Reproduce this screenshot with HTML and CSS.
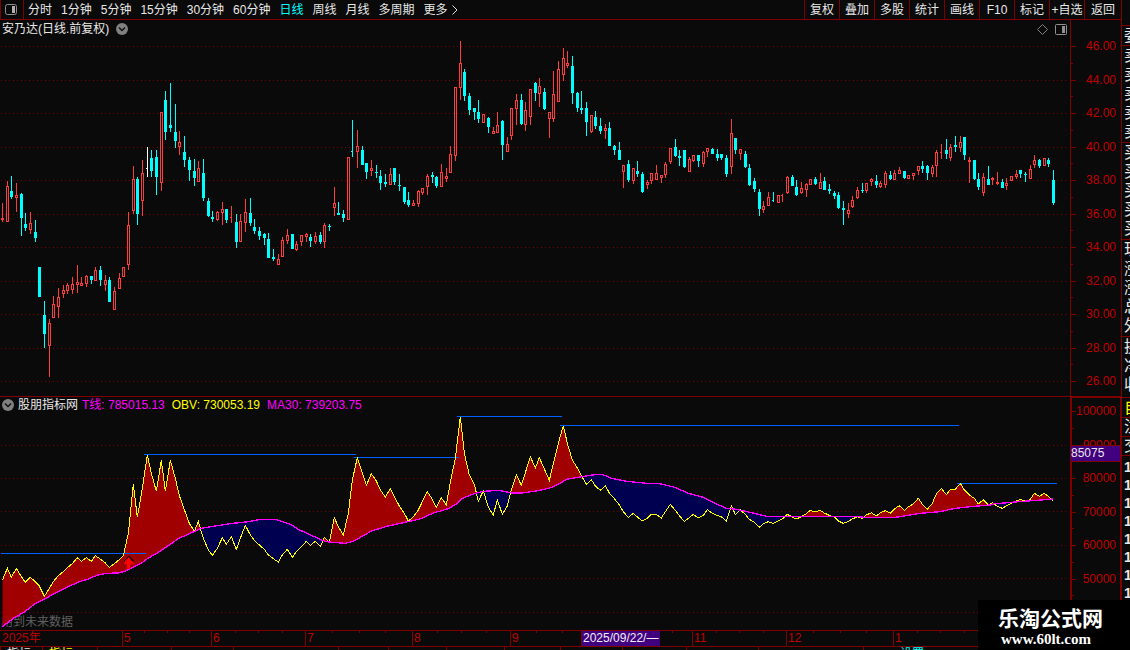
FILE: index.html
```html
<!DOCTYPE html>
<html lang="zh-CN">
<head>
    <meta charset="UTF-8">
    <meta name="viewport" content="width=device-width, initial-scale=1.0">
    <title>安乃达 日线</title>
    <link rel="stylesheet" href="styles.css">
</head>
<body>
    <main class="terminal">
        <header class="toolbar">
            <button class="layout-btn" type="button" aria-label="布局">
                <svg width="13" height="12" viewBox="0 0 13 12"><rect x="0.5" y="0.5" width="11" height="10" rx="2" fill="none" stroke="#909090"/><rect x="7" y="2" width="3" height="7" fill="#b0b0b0"/></svg>
            </button>
            <nav class="periods">
                <button type="button">分时</button>
                <button type="button">1分钟</button>
                <button type="button">5分钟</button>
                <button type="button">15分钟</button>
                <button type="button">30分钟</button>
                <button type="button">60分钟</button>
                <button type="button" class="active">日线</button>
                <button type="button">周线</button>
                <button type="button">月线</button>
                <button type="button">多周期</button>
                <button type="button" class="more">更多
                    <svg width="6" height="10" viewBox="0 0 6 10"><path d="M0.5 0.5 L5 5 L0.5 9.5" fill="none" stroke="#e0e0e0"/></svg>
                </button>
            </nav>
            <nav class="tools">
                <button type="button">复权</button>
                <button type="button">叠加</button>
                <button type="button">多股</button>
                <button type="button">统计</button>
                <button type="button">画线</button>
                <button type="button">F10</button>
                <button type="button">标记</button>
                <button type="button">+自选</button>
                <button type="button">返回</button>
            </nav>
        </header>

        <section class="panel price-panel">
            <div class="plot">
                <svg id="price-chart" viewBox="0 20 1070 376" preserveAspectRatio="none"></svg>
                <div class="panel-head">
                    <span>安乃达(日线.前复权)</span>
                    <button type="button" class="round" aria-label="展开">
                        <svg width="12" height="12" viewBox="0 0 12 12"><circle cx="6" cy="6" r="6" fill="#808080"/><path d="M3 4.5 L6 7.5 L9 4.5" fill="none" stroke="#101010" stroke-width="1.5"/></svg>
                    </button>
                    <div class="head-icons">
                        <svg width="11" height="11" viewBox="0 0 11 11"><path d="M5.5 0.5 L10.5 5.5 L5.5 10.5 L0.5 5.5 Z" fill="none" stroke="#808080"/></svg>
                        <svg width="12" height="11" viewBox="0 0 12 11"><rect x="0.5" y="0.5" width="11" height="10" rx="1" fill="none" stroke="#909090"/><rect x="7" y="2" width="3" height="7" fill="#909090"/></svg>
                    </div>
                </div>
            </div>
            <ul class="scale price-scale">
                <li>46.00</li><li class="minor"></li>
                <li>44.00</li><li class="minor"></li>
                <li>42.00</li><li class="minor"></li>
                <li>40.00</li><li class="minor"></li>
                <li>38.00</li><li class="minor"></li>
                <li>36.00</li><li class="minor"></li>
                <li>34.00</li><li class="minor"></li>
                <li>32.00</li><li class="minor"></li>
                <li>30.00</li><li class="minor"></li>
                <li>28.00</li><li class="minor"></li>
                <li>26.00</li>
            </ul>
        </section>

        <section class="panel obv-panel">
            <div class="plot">
                <span class="notice">用到未来数据</span>
                <svg id="obv-chart" viewBox="0 6 3210 699" preserveAspectRatio="none"></svg>
                <div class="panel-head">
                    <button type="button" class="round" aria-label="展开">
                        <svg width="12" height="12" viewBox="0 0 12 12"><circle cx="6" cy="6" r="6" fill="#808080"/><path d="M3 4.5 L6 7.5 L9 4.5" fill="none" stroke="#101010" stroke-width="1.5"/></svg>
                    </button>
                    <span>股朋指标网</span>
                    <div class="readings">
                        <span class="magenta">T线: 785015.13</span>
                        <span class="yellow">OBV: 730053.19</span>
                        <span class="magenta">MA30: 739203.75</span>
                    </div>
                </div>
            </div>
            <ul class="scale obv-scale">
                <li>100000</li><li class="minor"></li>
                <li>90000</li><li class="minor"></li>
                <li>80000</li><li class="minor"></li>
                <li>70000</li><li class="minor"></li>
                <li>60000</li><li class="minor"></li>
                <li>50000</li><li class="minor"></li>
                <li></li>
            </ul>
            <span class="value-tag">85075</span>
        </section>

        <div class="time-axis">
            <svg id="time-ticks" viewBox="0 0 1070 15" preserveAspectRatio="none"></svg>
            <span>2025年</span>
            <span>5</span>
            <span>6</span>
            <span>7</span>
            <span>8</span>
            <span>9</span>
            <span>11</span>
            <span>12</span>
            <span>1</span>
            <span class="date-tag">2025/09/22/—</span>
        </div>

        <footer class="tabs">
            <span>指标</span>
            <span class="yellow">指标</span>
            <span></span>
            <span></span>
            <span></span>
            <span></span>
            <span></span>
            <span></span>
            <span></span>
            <span></span>
            <span></span>
            <span></span>
            <span></span>
            <span class="cyan">设置</span>
        </footer>
    </main>

    <aside class="quote">
        <div class="group"><p>委比</p></div>
        <div class="group five"><p>卖五</p><p>卖四</p><p>卖三</p><p>卖二</p><p>卖一</p></div>
        <div class="group five"><p>买一</p><p>买二</p><p>买三</p><p>买四</p><p>买五</p></div>
        <div class="group five"><p>现价</p><p>涨跌</p><p>涨幅</p><p>总量</p><p>外盘</p></div>
        <div class="group three"><p>换手</p><p>净资</p><p>收益</p></div>
        <div class="group yellow"><p>自选</p></div>
        <div class="group row"><p>注册</p></div>
        <div class="group row"><p>交易</p></div>
        <div class="group trades"><p>14</p><p>14</p><p>14</p><p>14</p><p>14</p><p>14</p><p>14</p><p>14</p></div>
    </aside>

    <div class="site-logo">
        <strong>乐淘公式网</strong>
        <em>www.60lt.com</em>
    </div>

    <script src="chart.js"></script>
</body>
</html>
```
FILE: styles.css
```css
/* General Styles */
* {
    box-sizing: border-box;
}

body {
    display: flex;
    height: 100vh;
    margin: 0;
    overflow: hidden;
    background-color: #0a0a0a;
    color: #e8e8e8;
    font-family: "Liberation Sans", "Noto Sans CJK SC", sans-serif;
    font-size: 12px;
    line-height: 14px;
}

button {
    padding: 0;
    border: none;
    background: none;
    color: inherit;
    font: inherit;
    white-space: nowrap;
    cursor: pointer;
}

svg {
    display: block;
}

ul, p {
    margin: 0;
    padding: 0;
    list-style: none;
}

.yellow {
    color: #ffff00;
}

.magenta {
    color: #ff00ff;
}

.cyan {
    color: #00ffff;
}

.terminal {
    display: grid;
    flex: 1;
    grid-template-rows: 20px 376fr 234fr 16px 4px;
    min-width: 0;
}

/* Toolbar */
.toolbar {
    display: flex;
    border-bottom: 1px solid #800000;
    overflow: hidden;
}

.layout-btn {
    width: 24px;
    padding-left: 4px;
    border: 1px solid #800000;
    border-width: 0 1px;
}

.periods {
    display: flex;
    flex: 1;
    gap: 9px;
    padding-left: 4px;
}

.periods .active {
    color: #00ffff;
}

.periods .more {
    display: flex;
    align-items: center;
    gap: 4px;
}

.tools {
    display: flex;
}

.tools button {
    width: 35px;
    border-left: 1px solid #800000;
}

.tools button:last-child {
    width: 37px;
}

/* Chart panels */
.panel {
    position: relative;
    display: grid;
    grid-template-columns: 1fr 51px;
    min-height: 0;
}

.obv-panel {
    border-top: 1px solid #800000;
}

.plot {
    display: grid;
    min-width: 0;
    min-height: 0;
}

.plot > * {
    grid-area: 1 / 1;
}

.plot > svg {
    width: 100%;
    height: 100%;
    min-height: 0;
}

.panel-head {
    display: flex;
    align-self: start;
    align-items: center;
    gap: 4px;
    padding: 2px 2px 0;
}

.obv-panel .panel-head {
    padding-top: 1px;
}

.price-panel .panel-head {
    gap: 7px;
    padding-right: 3px;
}

.readings {
    display: flex;
    gap: 7px;
}

.head-icons {
    display: flex;
    gap: 7px;
    margin-left: auto;
}

.notice {
    align-self: end;
    padding: 0 0 1px 1px;
    color: #606060;
}

.scale {
    display: flex;
    flex-direction: column;
    justify-content: space-between;
    border-left: 1px solid #800000;
    color: #c00000;
    line-height: 13px;
}

.price-scale {
    padding: 20px 5px 8px 0;
}

.obv-scale {
    padding: 7px 4px 11px 0;
    border: 1px solid #800000;
    border-width: 1px 1px 0 2px;
}

.scale li {
    display: flex;
    align-items: center;
    justify-content: space-between;
    height: 13px;
}

.scale li::before {
    content: "";
    width: 5px;
    height: 1px;
    background-color: #800000;
}

.obv-scale li::before {
    width: 4px;
    margin-right: -4px;
}

.scale .minor::before {
    width: 2px;
}

.value-tag {
    position: absolute;
    top: 48px;
    right: 1px;
    width: 49px;
    border: 1px solid #800000;
    border-width: 1px 0;
    background-color: #400080;
    line-height: 15px;
}

/* Time axis */
.time-axis {
    position: relative;
    display: grid;
    grid-template-columns: 122fr 89fr 94fr 107fr 98fr 182fr 94fr 107fr 177fr;
    padding-right: 51px;
    border-top: 1px solid #800000;
    color: #c00000;
    line-height: 15px;
}

.time-axis svg {
    position: absolute;
    width: calc(100% - 51px);
    height: 100%;
}

.time-axis span {
    padding-left: 1px;
    border-left: 1px solid #800000;
}

.time-axis svg + span {
    border-color: transparent;
}

.time-axis .date-tag {
    position: absolute;
    left: calc((100% - 51px) * 581 / 1070);
    width: 79px;
    background-color: #400080;
    color: #f0f0f0;
    white-space: nowrap;
}

.tabs {
    display: grid;
    grid-template-columns: 42fr 55fr 74fr 62fr 105fr 50fr 58fr 58fr 56fr 62fr 64fr 72fr 105fr 258fr;
    border-top: 1px solid #800000;
    overflow: hidden;
}

.tabs span {
    padding-left: 6px;
    border-left: 1px solid #800000;
}

.tabs .cyan {
    padding-left: 36px;
}

/* Quote panel */
.quote {
    flex: 0 0 9px;
    padding-top: 25px;
    border-left: 1px solid #800000;
    overflow: hidden;
    font-size: 16px;
    line-height: 19px;
    white-space: nowrap;
}

.group {
    padding-left: 2px;
    border-top: 1px solid #800000;
}

.group.five {
    padding-bottom: 1px;
}

.group.three {
    padding-bottom: 3px;
}

.group.row p {
    line-height: 18px;
}

.group.trades {
    padding-top: 2px;
    font-size: 14px;
    font-weight: bold;
    line-height: 18px;
}

/* Site logo */
.site-logo {
    position: absolute;
    right: 0;
    bottom: 0;
    display: flex;
    flex-direction: column;
    width: 152px;
    height: 50px;
    padding: 7px 0 0 20px;
    background-color: #000;
    color: #fff;
}

.site-logo strong {
    font-size: 21px;
    line-height: 24px;
}

.site-logo em {
    padding-left: 3px;
    font-family: "Liberation Serif", serif;
    font-size: 15px;
    font-style: normal;
    font-weight: bold;
    line-height: 16px;
}
```
FILE: chart.js
```javascript
// Each candle: type, high, body top, body bottom, low
// r = up, c = down, d = up doji, e = down doji, w = flat
const candles = `
r 203 218 220 222,r 181 186 222 222,c 176 191 197 199,r 183 195 198 212,c 193 194 218 236,c 213 224 228 231,
r 212 223 230 234,c 220 232 238 242,c 267 267 297 297,c 301 315 334 348,r 319 323 346 377,r 296 304 318 318,
r 288 297 307 318,r 285 290 294 298,r 283 285 291 294,r 277 284 290 294,r 265 282 285 293,r 277 283 286 286,
r 275 276 284 287,c 276 276 280 284,r 267 270 281 281,c 266 270 280 286,r 275 280 285 291,c 277 280 302 302,
r 287 291 310 310,r 273 278 289 289,r 267 267 277 277,r 212 225 265 270,r 166 179 211 214,c 177 179 214 225,
r 160 173 201 216,w 147 168 169 177,c 150 158 171 177,c 150 157 177 195,r 112 112 183 191,c 91 100 132 140,
c 83 125 128 132,c 104 132 141 148,r 131 142 147 155,c 136 152 160 167,c 157 160 170 181,c 159 171 178 186,
r 161 168 182 182,c 159 173 198 201,c 198 201 216 217,c 211 217 219 222,r 211 212 220 221,r 202 209 213 225,
c 209 209 220 223,d 206 217 218 223,c 214 222 242 248,r 214 221 242 242,r 199 212 223 232,c 198 213 223 226,
c 219 227 231 234,c 227 231 236 240,c 233 234 238 245,c 233 239 258 258,c 249 257 259 261,r 254 259 265 265,
r 237 240 257 257,r 229 235 241 244,c 234 234 249 249,r 241 244 250 251,r 235 235 242 246,r 233 234 237 242,
c 234 237 241 247,r 232 236 242 244,c 232 235 242 244,r 223 225 242 248,c 224 226 227 231,r 187 203 208 216,
c 202 213 215 215,c 210 214 218 222,r 157 157 220 220,e 120 151 152 157,r 130 146 152 168,c 146 150 165 165,
c 163 163 172 179,r 160 168 171 176,c 165 172 173 178,c 170 176 183 190,c 174 182 184 187,r 168 174 185 185,
c 168 168 182 185,c 174 185 186 191,c 187 187 202 204,c 192 200 205 207,r 200 203 206 206,r 190 191 204 207,
r 188 188 193 195,r 174 176 187 195,c 172 175 177 183,c 176 177 186 188,r 164 172 187 187,r 168 176 179 182,
r 146 154 173 173,r 87 87 156 161,r 41 63 88 100,c 69 72 96 101,c 93 96 110 115,c 108 108 112 120,
c 100 112 119 123,r 114 114 123 123,c 117 118 127 133,r 127 131 134 134,r 112 125 133 133,c 120 121 145 160,
r 137 144 152 152,r 108 108 136 140,r 94 100 109 125,c 94 100 124 125,r 102 110 125 131,r 89 89 117 125,
c 82 83 93 101,r 78 86 94 107,c 88 92 109 110,r 112 112 119 138,r 71 94 119 122,r 61 69 102 102,
r 48 58 75 81,r 51 63 66 68,c 56 66 93 104,c 92 93 108 112,c 91 108 110 114,c 102 108 122 136,
r 115 115 132 133,c 111 117 126 129,c 118 126 131 134,r 124 128 131 139,c 122 128 146 146,c 145 146 150 155,
c 142 150 160 160,r 165 165 172 188,c 160 164 180 182,r 168 168 181 184,c 161 171 174 177,c 172 174 192 193,
r 180 182 185 189,r 173 173 181 184,r 165 173 180 180,r 175 175 178 183,r 162 164 175 178,r 148 148 162 164,
c 139 147 156 157,c 150 156 158 166,c 150 150 167 168,r 157 159 172 172,r 155 155 161 162,c 155 155 161 167,
r 151 152 164 167,r 148 148 152 157,c 148 149 154 154,c 149 154 158 161,c 154 154 158 160,c 155 158 174 177,
r 119 133 167 174,c 138 138 150 154,r 149 149 154 160,c 151 154 167 168,c 164 168 185 186,c 178 181 189 192,
c 189 192 209 216,r 201 206 210 213,r 192 197 206 206,e 192 200 201 202,r 195 195 203 203,d 194 195 196 202,
r 176 177 193 194,c 175 177 186 186,c 180 187 195 196,r 182 188 193 194,r 183 184 190 197,r 179 179 185 185,
c 177 179 184 185,r 173 182 189 189,c 177 181 190 190,c 184 189 191 194,c 191 193 196 199,c 192 195 208 209,
c 201 208 210 225,r 203 210 214 218,r 196 200 207 208,r 187 190 198 199,c 183 190 191 193,r 183 183 191 193,
r 178 179 182 186,c 175 181 185 188,r 181 183 187 188,r 171 173 185 188,c 171 175 179 180,r 170 173 180 180,
r 167 170 174 174,c 171 171 178 179,r 175 175 179 179,r 173 173 176 180,r 166 166 171 175,c 161 166 169 173,
c 165 166 173 180,r 165 167 174 177,r 150 152 166 177,d 144 152 153 159,c 139 150 154 159,r 144 147 158 161,
c 136 145 147 152,r 136 142 148 152,c 137 137 155 160,r 157 160 162 183,c 160 160 179 180,c 173 179 187 190,
r 173 177 193 196,c 166 179 185 185,r 177 178 180 185,r 172 182 184 185,c 179 182 188 188,r 178 183 186 190,
r 176 176 181 181,r 170 174 177 179,c 170 170 174 178,c 172 174 175 182,r 165 169 179 179,r 155 160 165 168,
c 159 160 166 168,r 158 158 166 166,c 158 160 164 167,c 170 180 203 205`.trim().split(',').map(c => c.trim().split(' '));

// OBV, one point per candle
const obv = [
    556, 520, 547, 520, 545, 562, 547, 560, 573, 604, 580, 560, 542, 530, 518, 506, 488, 499, 488, 499,
    482, 492, 504, 517, 506, 494, 482, 415, 268, 367, 280, 180, 235, 289, 196, 289, 196, 250, 302, 344,
    385, 409, 380, 430, 465, 481, 460, 428, 448, 425, 463, 430, 391, 420, 436, 450, 463, 480, 491, 501,
    480, 463, 487, 470, 455, 439, 451, 439, 454, 428, 441, 368, 395, 420, 355, 255, 188, 235, 271, 236,
    258, 285, 306, 281, 306, 333, 355, 378, 366, 345, 320, 290, 313, 337, 308, 330, 262, 190, 65, 175,
    240, 268, 319, 287, 337, 360, 314, 358, 333, 285, 239, 271, 233, 185, 219, 188, 222, 256, 205, 145,
    92, 145, 195, 219, 242, 268, 254, 273, 286, 272, 294, 311, 330, 350, 367, 355, 366, 378, 370, 358,
    358, 369, 350, 328, 346, 362, 379, 368, 358, 369, 361, 344, 355, 362, 365, 379, 332, 358, 345, 358,
    373, 382, 397, 386, 380, 385, 378, 372, 358, 366, 372, 365, 356, 346, 351, 346, 354, 361, 366, 378,
    385, 379, 372, 365, 370, 360, 353, 363, 353, 347, 355, 342, 332, 346, 336, 327, 310, 328, 343, 325,
    297, 280, 299, 283, 283, 265, 285, 300, 310, 327, 314, 330, 323, 334, 340, 333, 325, 318, 313, 319,
    313, 295, 304, 295, 304, 317
];

// MA30 curve
const ma = [
    [7, 695], [40, 670], [70, 653], [105, 626], [135, 611], [180, 587], [237, 560], [262, 553], [290, 541],
    [320, 535], [355, 534], [377, 528], [395, 518], [425, 504], [445, 489], [475, 472], [505, 452], [535, 431],
    [570, 415], [604, 400], [640, 394], [690, 386], [745, 380], [775, 374], [825, 373], [845, 379], [870, 387],
    [895, 403], [930, 419], [970, 437], [985, 441], [1010, 443], [1035, 445], [1060, 439], [1095, 419],
    [1115, 408], [1160, 394], [1210, 383], [1260, 372], [1300, 354], [1345, 341], [1372, 325], [1388, 310],
    [1425, 295], [1450, 289], [1495, 286], [1535, 294], [1565, 294], [1610, 288], [1650, 279], [1680, 265],
    [1700, 253], [1745, 245], [1775, 240], [1807, 238], [1835, 250], [1880, 259], [1940, 265], [1975, 265],
    [2025, 277], [2065, 295], [2110, 307], [2145, 325], [2180, 340], [2210, 343], [2250, 352], [2300, 364],
    [2565, 364], [2595, 367], [2685, 367], [2720, 362], [2760, 355], [2820, 350], [2860, 341], [2910, 335],
    [2970, 330], [2985, 326], [3025, 323], [3055, 320], [3110, 316], [3160, 312]
];

// T line segments: x1, x2, y
const tLines = [
    [3, 438, 475], [432, 1068, 178], [1062, 1377, 187], [1371, 1686, 64], [1680, 2877, 91], [2871, 3171, 265]
];

const minorTicks = [
    144, 167, 189, 235, 258, 282, 332, 359, 385, 437, 461, 486, 536, 562, 672, 716, 739, 763, 813, 840, 866,
    917, 940, 964
];

function candleX(i) {
    return Math.floor(2.45 + 4.672 * i);
}

function rect(x, y, w, h, fill) {
    return `<rect x="${x}" y="${y}" width="${w}" height="${h}" fill="${fill}"/>`;
}

function drawPrice() {
    const colors = { r: '#ff3c3c', d: '#ff3c3c', c: '#00ffff', e: '#00ffff', w: '#ffffff' };
    let out = '';
    [46, 80, 113, 147, 180, 214, 247, 281, 314, 348, 381].forEach(y => {
        out += `<path d="M1 ${y}.5 H1067" stroke="#780000" stroke-dasharray="1 3"/>`;
    });
    candles.forEach((c, i) => {
        const x = candleX(i);
        const [high, top, bottom, low] = c.slice(1).map(Number);
        const color = colors[c[0]];
        out += rect(x, high, 1, low - high, color);
        if (c[0] === 'r' || c[0] === 'c') {
            out += rect(x - 1, top, 3, bottom - top, color);
            // up candles are hollow
            if (c[0] === 'r' && bottom - top > 2) {
                out += rect(x, top + 1, 1, bottom - top - 2, '#0a0a0a');
            }
        } else {
            out += rect(x - 1, top, 1, 1, color);
        }
    });
    const svg = document.getElementById('price-chart');
    svg.setAttribute('shape-rendering', 'crispEdges');
    svg.innerHTML = out;
}

function drawObv() {
    const obvPoints = obv.map((y, i) => `${candleX(i) * 3 + 1},${y}`).join(' ');
    const maPoints = ma.map(p => p.join(',')).join(' ');
    let out = `
        <clipPath id="above-ma"><polygon points="7,0 ${maPoints} 3160,0"/></clipPath>
        <clipPath id="above-obv"><polygon points="7,0 ${obvPoints} 3160,0"/></clipPath>`;
    [151, 250, 349, 451, 550, 652].forEach(y => {
        out += `<path d="M3 ${y} H3201" stroke="#780000" stroke-width="3" stroke-dasharray="3 9"/>`;
    });
    out += `
        <polygon points="7,705 ${obvPoints} 3160,705" fill="#a00000" clip-path="url(#above-ma)"/>
        <polygon points="7,705 ${maPoints} 3160,705" fill="#000050" clip-path="url(#above-obv)"/>`;
    tLines.forEach(([x1, x2, y]) => {
        out += `<path d="M${x1} ${y} H${x2}" stroke="#0060ff" stroke-width="3"/>`;
    });
    out += `
        <polyline points="${obvPoints}" fill="none" stroke="#ffff00" stroke-width="3"/>
        <polyline points="${maPoints}" fill="none" stroke="#ff00ff" stroke-width="4"/>
        <path d="M372 499 L386 484 L401 499" fill="none" stroke="#300000" stroke-width="3"/>
        <path d="M386 487 L402 506 H391 V521 H382 V506 H371 Z" fill="#ff0000"/>`;
    const svg = document.getElementById('obv-chart');
    svg.setAttribute('shape-rendering', 'crispEdges');
    svg.innerHTML = out;
}

function drawTicks() {
    document.getElementById('time-ticks').innerHTML = minorTicks.map(x => rect(x, 0, 1, 2, '#800000')).join('');
}

drawPrice();
drawObv();
drawTicks();
```
